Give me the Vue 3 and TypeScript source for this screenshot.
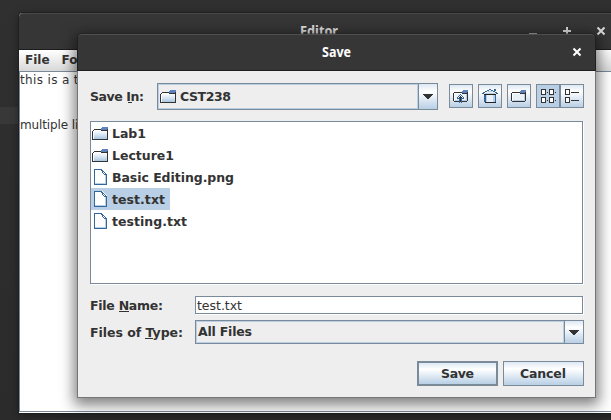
<script setup lang="ts">
import { ref } from 'vue'

interface Entry {
  name: string
  kind: 'folder' | 'file'
  width: number
}

const entries: Entry[] = [
  { name: 'Lab1', kind: 'folder', width: 34 },
  { name: 'Lecture1', kind: 'folder', width: 62 },
  { name: 'Basic Editing.png', kind: 'file', width: 122 },
  { name: 'test.txt', kind: 'file', width: 53 },
  { name: 'testing.txt', kind: 'file', width: 75 },
]
const selected = ref('test.txt')
</script>

<template>
  <div class="desktop">
    <div class="strip"></div>
    <section class="editor">
      <header class="titlebar">
        <svg class="title" width="40" height="18"><text x="0" y="14" textLength="38" lengthAdjust="spacingAndGlyphs">Editor</text></svg>
        <svg class="wm" width="80" height="12" viewBox="0 0 80 12">
          <path d="M0 9h8M34 6h8M38 2v8" />
          <path d="M68.500 2.500l7 7M75.500 2.500l-7 7" />
        </svg>
      </header>
      <nav class="menu"><span>File</span><span>Format</span></nav>
      <div class="text">
        <p class="loose">this is a test</p>
        <p></p>
        <p></p>
        <p class="tight">multiple lines</p>
      </div>
    </section>

    <section class="dialog">
      <header class="dialog-title">
        <svg class="title" width="32" height="18"><text x="0" y="14" textLength="29" lengthAdjust="spacingAndGlyphs">Save</text></svg>
        <svg class="close" width="10" height="10" viewBox="0 0 10 10"><path d="M1.500 1.500l7 7M8.500 1.500l-7 7" /></svg>
      </header>
      <div class="body">
        <div class="top-row">
          <label class="t save-in"><svg class="lbl" width="56" height="18"><text x="0" y="13" textLength="54">Save In:</text><path d="M38 14.500h4" /></svg></label>
          <div class="combo dir">
            <div class="value">
              <svg class="icon" width="16" height="16" viewBox="0 0 16 16"><use href="#folder" /></svg>
              <svg class="lbl" width="54" height="18"><text x="0" y="13" textLength="51">CST238</text></svg>
            </div>
            <div class="arrow"><svg width="10" height="5" viewBox="0 0 10 5"><path d="M0 0h10v1H9v1H8v1H7v1H6v1H4V4H3V3H2V2H1V1H0z" /></svg></div>
          </div>
          <div class="tools">
            <button class="tool" aria-label="Up">
              <svg width="16" height="16" viewBox="0 0 16 16">
                <use href="#tool-folder" />
                <path fill="#336699" d="M7 6h1v1H7zM6 7h1v1H6zM8 7h1v1H8zM5 8h1v1H5zM9 8h1v1H9zM4 9h1v1H4zM10 9h1v1h-1zM4 10h2v1H4zM9 10h2v1H9zM6 10h1v5H6zM8 10h1v5H8z" />
                <path fill="#333" d="M7 8h1v6H7zM6 9h3v1H6z" />
              </svg>
            </button>
            <button class="tool" aria-label="Home">
              <svg width="16" height="16" viewBox="0 0 16 16">
                <path fill="#e9f1f9" d="M7 2h2v1h2v1h2v1h1v9H3V5h1V4h1V3h2z" />
                <path fill="#b8cfe5" d="M6 3h4v1H6zM3 5h10v1H3zM4 7h1v7H4zM11 7h2v7h-2z" />
                <path fill="#336699" d="M7 1h2v1H7zM5 2h2v1H5zM9 2h2v1H9zM3 3h2v1H3zM11 3h2v1h-2zM1 4h2v1H1zM13 4h2v1h-2zM0 5h2v1H0zM14 5h2v1h-2zM12 1h2v2h-2zM2 6h2v8H2zM13 6h1v8h-1z" />
                <path fill="#222" d="M2 6h12v1H2zM3 14h11v1H3z" />
              </svg>
            </button>
            <button class="tool" aria-label="New folder">
              <svg width="16" height="16" viewBox="0 0 16 16"><use href="#tool-folder" /></svg>
            </button>
            <div class="views">
              <button class="tool on" aria-label="List">
                <svg width="16" height="16" viewBox="0 0 16 16">
                  <path class="box" d="M1.500 1.500h4v5h-4zM9.500 1.500h4v5h-4zM1.500 9.500h4v5h-4zM9.500 9.500h4v5h-4z" transform="translate(-1 0)" />
                  <path fill="#333" d="M6 4h1v1H6zM14 4h1v1h-1zM6 12h1v1H6zM14 12h1v1h-1z" />
                </svg>
              </button>
              <button class="tool details" aria-label="Details">
                <svg width="16" height="16" viewBox="0 0 16 16">
                  <path class="box" d="M1.500 1.500h4v5h-4zM1.500 9.500h4v5h-4z" />
                  <path fill="#333" d="M7 4h8v1H7zM7 12h8v1H7z" />
                </svg>
              </button>
            </div>
          </div>
        </div>

        <ul class="list">
          <li v-for="e in entries" :key="e.name" :class="{ sel: e.name === selected }" @click="selected = e.name">
            <svg class="icon" width="16" height="16" viewBox="0 0 16 16"><use :href="'#' + e.kind" /></svg>
            <svg class="lbl" :width="e.width + 2" height="18"><text x="0" y="13" :textLength="e.width">{{ e.name }}</text></svg>
          </li>
        </ul>

        <div class="name-row">
          <label class="t"><svg class="lbl" width="80" height="18"><text x="0" y="14" textLength="73">File Name:</text><path d="M29 15.500h10" /></svg></label>
          <div class="field"><svg class="lbl plain" width="60" height="18"><text x="0" y="13" textLength="45">test.txt</text></svg></div>
        </div>
        <div class="type-row">
          <label class="t"><svg class="lbl" width="96" height="18"><text x="0" y="14" textLength="93">Files of Type:</text><path d="M55 15.500h8" /></svg></label>
          <div class="combo type">
            <div class="value"><svg class="lbl" width="58" height="18"><text x="0" y="13" textLength="54">All Files</text></svg></div>
            <div class="arrow"><svg width="10" height="5" viewBox="0 0 10 5"><path d="M0 0h10v1H9v1H8v1H7v1H6v1H4V4H3V3H2V2H1V1H0z" /></svg></div>
          </div>
        </div>
        <div class="actions">
          <button class="btn primary"><svg class="lbl" width="34" height="17"><text x="0" y="13" textLength="33">Save</text></svg></button>
          <button class="btn"><svg class="lbl" width="47" height="17"><text x="0" y="13" textLength="46">Cancel</text></svg></button>
        </div>
      </div>
    </section>

    <svg class="defs" width="0" height="0">
      <defs>
        <linearGradient id="blue" x1="0" y1="0" x2="0" y2="1">
          <stop offset="0" stop-color="#fff" /><stop offset=".35" stop-color="#e9f1f8" /><stop offset="1" stop-color="#a9c7e2" />
        </linearGradient>
        <symbol id="folder" viewBox="0 0 16 16">
          <path fill="url(#blue)" d="M1 5h14v9H1z" />
          <path fill="#333" d="M2 4h7v1H2zM1 5h1v1H1zM0 6h1v9H0zM1 14h15v1H1zM15 4h1v10h-1zM9 5h6v1H9z" />
          <path fill="#fff" d="M2 5h7v1H2zM1 6h1v8H1z" />
          <path fill="#5c80c0" d="M10 2h6v2h-6zM9 3h1v2H9zM10 4h5v1h-5z" />
        </symbol>
        <symbol id="tool-folder" viewBox="0 0 16 16">
          <path fill="#e9f1f9" d="M1 4h14v9H1z" />
          <path fill="#333" d="M1 4h8v1H1zM0 5h1v8H0zM1 13h13v1H1zM14 4h1v9h-1zM9 5h5v1H9z" />
          <path fill="#fff" d="M1 5h8v1H1zM1 6h1v7H1z" />
          <path fill="#b8cfe5" d="M2 12h12v1H2zM13 6h1v6h-1z" />
          <path fill="#5c80c0" d="M10 2h5v2h-5zM9 3h1v2H9zM10 4h4v1h-4z" />
        </symbol>
        <symbol id="file" viewBox="0 0 16 16">
          <path fill="#fff" d="M2 0h8l5 5v11H2z" />
          <path fill="#b8cfe5" d="M3 14h10v1H3zM13 6h1v9h-1z" />
          <path fill="#336699" d="M2 0h8v1H2zM2 0h1v16H2zM2 15h13v1H2zM14 5h1v11h-1zM10 1h1v1h-1zM11 2h1v1h-1zM12 3h1v1h-1zM13 4h1v1h-1zM9 1h1v1H9zM10 2h1v2h-1zM11 4h1v1h-1zM12 5h2v1h-2z" />
        </symbol>
      </defs>
    </svg>
  </div>
</template>

<style>
body {
  overflow: hidden;
}
</style>

<style scoped>
* {
  box-sizing: border-box;
}
.desktop {
  position: relative;
  width: 611px;
  height: 420px;
  overflow: hidden;
  background: linear-gradient(#303030, #2b2b2b);
  font-family: 'DejaVu Sans', sans-serif;
  font-size: 12px;
  color: #333;
}
.strip {
  position: absolute;
  left: 0;
  top: 107px;
  width: 19px;
  height: 17px;
  background: #383838;
}
.defs {
  position: absolute;
}
.editor {
  position: absolute;
  left: 19px;
  top: 13px;
  width: 600px;
  height: 400px;
  background: #fff;
  border-radius: 4px 4px 0 0;
  box-shadow: 0 0 0 1px #1f1f1f, 0 2px 10px rgba(0, 0, 0, 0.4);
  display: flex;
  flex-direction: column;
}
.titlebar {
  position: relative;
  height: 37px;
  background: #363636;
  border-top: 1px solid #4a4a4a;
  border-bottom: 1px solid #1c1c1c;
  border-radius: 4px 4px 0 0;
  flex: none;
  padding: 8px 0 0 281px;
}
.title {
  display: block;
  overflow: visible;
  font: bold 14px 'Noto Sans', sans-serif;
  fill: #e0e0e0;
}
.wm {
  position: absolute;
  left: 510px;
  top: 11px;
  overflow: visible;
  fill: none;
  stroke: #ddd;
  stroke-width: 2;
}
.menu {
  height: 22px;
  flex: none;
  display: flex;
  gap: 12px;
  padding: 1px 0 0 6px;
  background: linear-gradient(#fff, #dadada 20px);
  border-bottom: 1px solid #7a8a99;
  font-weight: bold;
  line-height: 18px;
}
.text {
  flex: 1;
  border-left: 1px solid #7a8a99;
  border-bottom: 1px solid #7a8a99;
  margin-bottom: 1px;
  padding-top: 1px;
}
.text p {
  margin: 0;
  height: 15px;
  line-height: 15px;
}
.text .loose {
  letter-spacing: 0.35px;
}
.text .tight {
  letter-spacing: -0.12px;
}
.dialog {
  position: absolute;
  left: 77px;
  top: 33px;
  width: 519px;
  height: 365px;
  border-radius: 5px 5px 0 0;
  box-shadow: 0 4px 14px 3px rgba(0, 0, 0, 0.5);
}
.dialog-title {
  position: relative;
  height: 38px;
  background: #363636 padding-box;
  border: 1px solid #1f1f1f;
  border-top-color: rgba(20, 20, 20, 0.5);
  border-radius: 5px 5px 0 0;
  box-shadow: inset 0 1px #505050;
  padding: 9px 0 0 244px;
}
.dialog-title .title {
  fill: #fff;
}
.close {
  position: absolute;
  left: 494px;
  top: 13px;
  fill: none;
  stroke: #fff;
  stroke-width: 2;
}
.body {
  height: 327px;
  padding: 12px 11px 11px 12px;
  background: #eee;
  border: 1px solid #757575;
  border-top: 0;
}
.lbl {
  display: block;
  overflow: visible;
  flex: none;
  font: bold 12.500px 'DejaVu Sans', sans-serif;
  fill: #333;
}
.lbl path {
  stroke: #333;
  stroke-width: 1;
}
.plain {
  font-weight: normal;
}
.icon,
.tool svg,
.arrow svg {
  display: block;
  shape-rendering: crispEdges;
  flex: none;
}
.top-row {
  display: flex;
  height: 27px;
}
.save-in {
  width: 67px;
  padding-top: 5px;
}
.combo {
  display: flex;
  border: 1px solid #7a8a99;
}
.combo .value {
  flex: 1;
  display: flex;
  align-items: flex-start;
  border: 1px solid #b8cfe5;
}
.dir {
  width: 281px;
}
.dir .value {
  padding: 3px 0 0 1px;
  gap: 4px;
}
.arrow {
  width: 19px;
  border-left: 1px solid #7a8a99;
  display: flex;
  align-items: center;
  justify-content: center;
  background: linear-gradient(#dde8f3, #fff 30%, #b8cfe5);
  fill: #333;
}
.tools {
  display: flex;
  gap: 5px;
  padding: 1px 0 0 11px;
}
.tool {
  width: 24px;
  height: 24px;
  padding: 3px;
  border: 1px solid #7a8a99;
  background: linear-gradient(#dde8f3, #fff 30%, #b8cfe5);
}
.views {
  display: flex;
}
.tool.on {
  background: #b8cfe5;
}
.on svg {
  position: relative;
  left: 1px;
}
.box {
  fill: #fff;
  stroke: #333;
  stroke-width: 1;
}
.list {
  list-style: none;
  margin: 11px 0 0;
  padding: 0;
  width: 493px;
  height: 163px;
  border: 1px solid #7a8a99;
  background: #fff;
  box-shadow: 1px 1px #fff;
}
.list li {
  display: flex;
  width: max-content;
  height: 22px;
  padding: 3px 3px 0 1px;
  gap: 4px;
}
.sel {
  background: #b8cfe5;
}
.name-row {
  display: flex;
  margin-top: 12px;
  height: 18px;
}
.t {
  flex: none;
}
.name-row .t,
.type-row .t {
  width: 105px;
}
.field {
  width: 388px;
  height: 18px;
  border: 1px solid #7a8a99;
  background: #fff;
  box-shadow: 1px 1px #fff;
  padding-left: 1px;
}
.type-row {
  display: flex;
  margin-top: 6px;
  height: 24px;
}
.type-row .t {
  padding-top: 3px;
}
.type {
  width: 389px;
}
.type .value {
  padding: 1px 0 0 1px;
}
.actions {
  display: flex;
  gap: 5px;
  margin: 17px 0 0 327px;
}
.btn {
  width: 81px;
  height: 25px;
  padding: 0;
  display: flex;
  align-items: center;
  justify-content: center;
  border: 1px solid #7a8a99;
  background: linear-gradient(#dde8f3, #fff 30%, #b8cfe5);
}
.primary {
  border-width: 2px;
}
</style>
